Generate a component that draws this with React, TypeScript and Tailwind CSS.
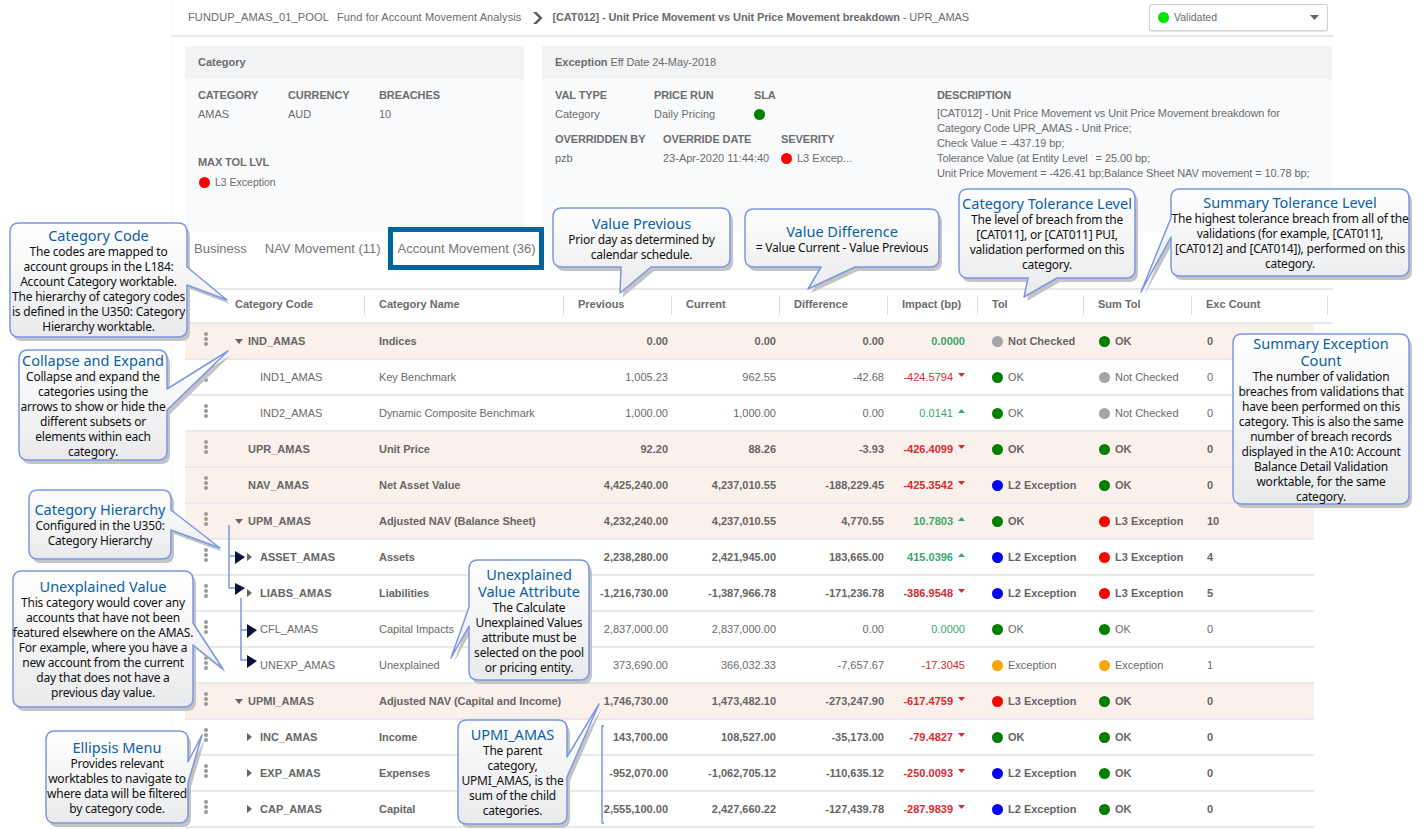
import React from 'react';

type Level = 'ok' | 'nc' | 'l2' | 'l3' | 'ex';
type Row = {
  code: string;
  name: string;
  prev: string;
  curr: string;
  diff: string;
  impact: string;
  dir?: 'up' | 'down';
  tol: Level;
  sum: Level;
  exc: string;
  pink?: boolean;
  bold?: boolean;
  child?: boolean;
  caret?: 'down' | 'right';
};

const LEVELS: Record<Level, { label: string; dot: string }> = {
  ok: { label: 'OK', dot: 'bg-[#008000]' },
  nc: { label: 'Not Checked', dot: 'bg-[#a5a5a5]' },
  l2: { label: 'L2 Exception', dot: 'bg-[#0000ff]' },
  l3: { label: 'L3 Exception', dot: 'bg-[#ff0000]' },
  ex: { label: 'Exception', dot: 'bg-[#ffa500]' },
};

const ROWS: Row[] = [
  { code: 'IND_AMAS', name: 'Indices', prev: '0.00', curr: '0.00', diff: '0.00', impact: '0.0000', tol: 'nc', sum: 'ok', exc: '0', pink: true, bold: true, caret: 'down' },
  { code: 'IND1_AMAS', name: 'Key Benchmark', prev: '1,005.23', curr: '962.55', diff: '-42.68', impact: '-424.5794', dir: 'down', tol: 'ok', sum: 'nc', exc: '0', child: true },
  { code: 'IND2_AMAS', name: 'Dynamic Composite Benchmark', prev: '1,000.00', curr: '1,000.00', diff: '0.00', impact: '0.0141', dir: 'up', tol: 'ok', sum: 'nc', exc: '0', child: true },
  { code: 'UPR_AMAS', name: 'Unit Price', prev: '92.20', curr: '88.26', diff: '-3.93', impact: '-426.4099', dir: 'down', tol: 'ok', sum: 'ok', exc: '0', pink: true, bold: true },
  { code: 'NAV_AMAS', name: 'Net Asset Value', prev: '4,425,240.00', curr: '4,237,010.55', diff: '-188,229.45', impact: '-425.3542', dir: 'down', tol: 'l2', sum: 'ok', exc: '0', pink: true, bold: true },
  { code: 'UPM_AMAS', name: 'Adjusted NAV (Balance Sheet)', prev: '4,232,240.00', curr: '4,237,010.55', diff: '4,770.55', impact: '10.7803', dir: 'up', tol: 'ok', sum: 'l3', exc: '10', pink: true, bold: true, caret: 'down' },
  { code: 'ASSET_AMAS', name: 'Assets', prev: '2,238,280.00', curr: '2,421,945.00', diff: '183,665.00', impact: '415.0396', dir: 'up', tol: 'l2', sum: 'l3', exc: '4', bold: true, child: true, caret: 'right' },
  { code: 'LIABS_AMAS', name: 'Liabilities', prev: '-1,216,730.00', curr: '-1,387,966.78', diff: '-171,236.78', impact: '-386.9548', dir: 'down', tol: 'l2', sum: 'l3', exc: '5', bold: true, child: true, caret: 'right' },
  { code: 'CFL_AMAS', name: 'Capital Impacts', prev: '2,837,000.00', curr: '2,837,000.00', diff: '0.00', impact: '0.0000', tol: 'ok', sum: 'ok', exc: '0', child: true },
  { code: 'UNEXP_AMAS', name: 'Unexplained', prev: '373,690.00', curr: '366,032.33', diff: '-7,657.67', impact: '-17.3045', tol: 'ex', sum: 'ex', exc: '1', child: true },
  { code: 'UPMI_AMAS', name: 'Adjusted NAV (Capital and Income)', prev: '1,746,730.00', curr: '1,473,482.10', diff: '-273,247.90', impact: '-617.4759', dir: 'down', tol: 'l3', sum: 'ok', exc: '0', pink: true, bold: true, caret: 'down' },
  { code: 'INC_AMAS', name: 'Income', prev: '143,700.00', curr: '108,527.00', diff: '-35,173.00', impact: '-79.4827', dir: 'down', tol: 'ok', sum: 'ok', exc: '0', bold: true, child: true, caret: 'right' },
  { code: 'EXP_AMAS', name: 'Expenses', prev: '-952,070.00', curr: '-1,062,705.12', diff: '-110,635.12', impact: '-250.0093', dir: 'down', tol: 'l2', sum: 'ok', exc: '0', bold: true, child: true, caret: 'right' },
  { code: 'CAP_AMAS', name: 'Capital', prev: '2,555,100.00', curr: '2,427,660.22', diff: '-127,439.78', impact: '-287.9839', dir: 'down', tol: 'l2', sum: 'ok', exc: '0', bold: true, child: true, caret: 'right' },
];

const HEADERS = ['Category Code', 'Category Name', 'Previous', 'Current', 'Difference', 'Impact (bp)', 'Tol', 'Sum Tol', 'Exc Count'];

const GRID = 'grid grid-cols-[180px_199px_108px_108px_108px_90px_106px_108px_122px]';
const HEAD_GRID = 'grid grid-cols-[180px_199px_108px_108px_108px_90px_106px_108px_136px]';

// x, y, w, h of the box, then the tail as three points (start, tip, end)
type Tail = number[];
const SHAPES: { x: number; y: number; w: number; h: number; side: 'l' | 'r' | 'b'; tail: Tail }[] = [
  { x: 10, y: 223, w: 177, h: 114, side: 'r', tail: [187, 267, 227, 300, 187, 285] },
  { x: 19, y: 350, w: 148, h: 110, side: 'r', tail: [167, 389, 228, 351, 167, 410] },
  { x: 29, y: 490, w: 142, h: 69, side: 'r', tail: [171, 510, 220, 548, 171, 530] },
  { x: 13, y: 571, w: 180, h: 136, side: 'r', tail: [193, 623, 223, 669, 193, 645] },
  { x: 46, y: 731, w: 142, h: 92, side: 'r', tail: [188, 762, 202, 735, 188, 783] },
  { x: 469, y: 560, w: 120, h: 120, side: 'l', tail: [469, 626, 451, 658, 469, 607] },
  { x: 458, y: 720, w: 109, h: 104, side: 'r', tail: [567, 757, 599, 704, 567, 777] },
  { x: 553, y: 208, w: 177, h: 59, side: 'b', tail: [651, 267, 620, 293, 621, 267] },
  { x: 745, y: 209, w: 194, h: 58, side: 'b', tail: [855, 267, 808, 289, 821, 267] },
  { x: 959, y: 189, w: 176, h: 89, side: 'b', tail: [1057, 278, 1024, 297, 1028, 278] },
  { x: 1171, y: 189, w: 238, h: 87, side: 'l', tail: [1171, 237, 1141, 292, 1171, 218] },
  { x: 1233, y: 334, w: 176, h: 170, side: 'r', tail: [] },
];

const shapePath = (s: (typeof SHAPES)[number], dx = 0, dy = 0) => {
  const r = 9;
  const x = s.x + dx;
  const y = s.y + dy;
  const x2 = x + s.w;
  const y2 = y + s.h;
  const t = s.tail.map((v, i) => v + (i % 2 === 0 ? dx : dy));
  const pts = (side: string) =>
    s.side === side && t.length ? `L${t[0]} ${t[1]} L${t[2]} ${t[3]} L${t[4]} ${t[5]} ` : '';
  // the tail points are given in the order the outline runs past them (clockwise)
  return (
    `M${x + r} ${y} L${x2 - r} ${y} Q${x2} ${y} ${x2} ${y + r} ` +
    pts('r') +
    `L${x2} ${y2 - r} Q${x2} ${y2} ${x2 - r} ${y2} ` +
    pts('b') +
    `L${x + r} ${y2} Q${x} ${y2} ${x} ${y2 - r} ` +
    pts('l') +
    `L${x} ${y + r} Q${x} ${y} ${x + r} ${y} Z`
  );
};

const CALLOUTS: { pos: string; title: string[]; lines: string[] }[] = [
  { pos: 'left-[10px] top-[223px] w-[177px] h-[114px]', title: ['Category Code'], lines: ['The codes are mapped to', 'account groups in the L184:', 'Account Category worktable.', 'The hierarchy of category codes', 'is defined in the U350: Category', 'Hierarchy worktable.'] },
  { pos: 'left-[19px] top-[350px] w-[148px] h-[110px]', title: ['Collapse and Expand'], lines: ['Collapse and expand the', 'categories using the', 'arrows to show or hide the', 'different subsets or', 'elements within each', 'category.'] },
  { pos: 'left-[29px] top-[490px] w-[142px] h-[69px]', title: ['Category Hierarchy'], lines: ['Configured in the U350:', 'Category Hierarchy'] },
  { pos: 'left-[13px] top-[571px] w-[180px] h-[136px]', title: ['Unexplained Value'], lines: ['This category would cover any', 'accounts that have not been', 'featured elsewhere on the AMAS.', 'For example, where you have a', 'new account from the current', 'day that does not have a', 'previous day value.'] },
  { pos: 'left-[46px] top-[731px] w-[142px] h-[92px]', title: ['Ellipsis Menu'], lines: ['Provides relevant', 'worktables to navigate to', 'where data will be filtered', 'by category code.'] },
  { pos: 'left-[469px] top-[560px] w-[120px] h-[120px]', title: ['Unexplained', 'Value Attribute'], lines: ['The Calculate', 'Unexplained Values', 'attribute must be', 'selected on the pool', 'or pricing entity.'] },
  { pos: 'left-[458px] top-[720px] w-[109px] h-[104px]', title: ['UPMI_AMAS'], lines: ['The parent', 'category,', 'UPMI_AMAS, is the', 'sum of the child', 'categories.'] },
  { pos: 'left-[553px] top-[209px] w-[177px] h-[59px]', title: ['Value Previous'], lines: ['Prior day as determined by', 'calendar schedule.'] },
  { pos: 'left-[745px] top-[210px] w-[194px] h-[58px]', title: ['Value Difference'], lines: ['= Value Current - Value Previous'] },
  { pos: 'left-[959px] top-[189px] w-[176px] h-[89px]', title: ['Category Tolerance Level'], lines: ['The level of breach from the', '[CAT011], or [CAT011] PUI,', 'validation performed on this', 'category.'] },
  { pos: 'left-[1171px] top-[189px] w-[238px] h-[87px]', title: ['Summary Tolerance Level'], lines: ['The highest tolerance breach from all of the', 'validations (for example, [CAT011],', '[CAT012] and [CAT014]), performed on this', 'category.'] },
  { pos: 'left-[1233px] top-[334px] w-[176px] h-[170px]', title: ['Summary Exception', 'Count'], lines: ['The number of validation', 'breaches from validations that', 'have been performed on this', 'category. This is also the same', 'number of breach records', 'displayed in the A10: Account', 'Balance Detail Validation', 'worktable, for the same', 'category.'] },
];

const Dot: React.FC<{ cls: string; size?: string }> = ({ cls, size = 'w-[11px] h-[11px]' }) => (
  <span className={`inline-block rounded-full shrink-0 ${size} ${cls}`} />
);

const Status: React.FC<{ level: Level }> = ({ level }) => (
  <div className="flex items-center gap-[5px]">
    <Dot cls={LEVELS[level].dot} />
    <span>{LEVELS[level].label}</span>
  </div>
);

const Label: React.FC<{ children: React.ReactNode }> = ({ children }) => (
  <div className="font-bold text-[#6e6e6e] tracking-[-0.1px]">{children}</div>
);

const TableRow: React.FC<{ row: Row }> = ({ row }) => (
  <div
    className={`${GRID} w-[1129px] h-[36px] items-center border-b-2 border-[#e9e9e9] ${row.pink ? 'bg-[#fbf1ec]' : 'bg-white'} ${row.bold ? 'font-bold text-[#666666]' : 'text-[#6c6c6c]'}`}
  >
    <div className={`relative flex items-center ${row.child ? 'pl-[62px]' : 'pl-[50px]'}`}>
      <span className="absolute left-[19px] top-[-1px] flex flex-col gap-[1px]">
        <span className="w-[4px] h-[4px] rounded-full bg-[#9a9a9a]" />
        <span className="w-[4px] h-[4px] rounded-full bg-[#9a9a9a]" />
        <span className="w-[4px] h-[4px] rounded-full bg-[#9a9a9a]" />
      </span>
      <span className="w-[13px] flex items-center">
        {row.caret === 'down' && (
          <svg width="8" height="5" viewBox="0 0 8 5">
            <path d="M0 0H8L4 5Z" fill="#666" />
          </svg>
        )}
        {row.caret === 'right' && (
          <svg width="5" height="8" viewBox="0 0 5 8">
            <path d="M0 0V8L5 4Z" fill="#666" />
          </svg>
        )}
      </span>
      <span>{row.code}</span>
    </div>
    <div className="ml-[14px] justify-self-start whitespace-nowrap tracking-[-0.05px]">{row.name}</div>
    <div className="text-right pr-[4px]">{row.prev}</div>
    <div className="text-right pr-[4px]">{row.curr}</div>
    <div className="text-right pr-[4px]">{row.diff}</div>
    <div className="flex items-center justify-end pr-[13px]">
      <span className={row.impact.startsWith('-') ? 'text-[#d92a2f]' : 'text-[#3aa76d]'}>{row.impact}</span>
      {row.dir === 'up' && (
        <svg className="ml-[5px] mb-[5px]" width="7" height="4" viewBox="0 0 7 4">
          <path d="M0 4H7L3.5 0Z" fill="#3aa76d" />
        </svg>
      )}
      {row.dir === 'down' && (
        <svg className="ml-[5px] mb-[5px]" width="7" height="4" viewBox="0 0 7 4">
          <path d="M0 0H7L3.5 4Z" fill="#d92a2f" />
        </svg>
      )}
    </div>
    <div className="pl-[14px] whitespace-nowrap">
      <Status level={row.tol} />
    </div>
    <div className="pl-[15px] whitespace-nowrap">
      <Status level={row.sum} />
    </div>
    <div className="ml-[15px] justify-self-start">{row.exc}</div>
  </div>
);

const App: React.FC = () => {
  return (
    <div className="relative w-[1424px] h-[829px] overflow-hidden bg-white text-[11px] text-[#6c6c6c] font-['Liberation_Sans',Arial,sans-serif]">
      <div className="ml-[171px] w-[1162px] h-[829px] border-l border-[#f6f6f6]">
        {/* breadcrumb */}
        <div className="flex items-center h-[37px] border-b-2 border-[#e8e8e8] pl-[16px] pr-[4px]">
          <span className="tracking-[0.15px]">FUNDUP_AMAS_01_POOL</span>
          <span className="ml-[8px] tracking-[0.1px]">Fund for Account Movement Analysis</span>
          <svg className="ml-[11px]" width="11" height="14" viewBox="0 0 11 14">
            <path d="M1 1L7 7L1 13H4.5L10.5 7L4.5 1Z" fill="#5c5c5c" />
          </svg>
          <span className="ml-[9px] font-bold tracking-[-0.11px]">[CAT012] - Unit Price Movement vs Unit Price Movement breakdown</span>
          <span className="ml-[3px] tracking-[-0.1px]">- UPR_AMAS</span>
          <div className="ml-auto flex items-center w-[179px] h-[27px] border border-[#cfcfcf] rounded-[3px] pl-[8px] pr-[8px] gap-[5px] bg-white shadow-[0_1px_1px_#e5e5e5]">
            <Dot cls="bg-[#00e600]" />
            <span className="text-[10.5px]">Validated</span>
            <svg className="ml-auto" width="9" height="5" viewBox="0 0 9 5">
              <path d="M0 0H9L4.5 5Z" fill="#666" />
            </svg>
          </div>
          <div className="w-[1px]" />
        </div>

        {/* summary panels */}
        <div className="flex gap-[18px] pl-[13px] pt-[9px]">
          <div className="w-[339px] h-[186px] bg-[#f9fafc]">
            <div className="h-[33px] flex items-center pl-[13px] bg-[#f2f3f5] font-bold">Category</div>
            <div className="pl-[13px] pt-[10px]">
              <div className="grid grid-cols-[90px_91px_90px] gap-y-[6px] leading-[13px]">
                <Label>CATEGORY</Label>
                <Label>CURRENCY</Label>
                <Label>BREACHES</Label>
                <div>AMAS</div>
                <div>AUD</div>
                <div>10</div>
              </div>
              <div className="mt-[35px] leading-[13px]">
                <Label>MAX TOL LVL</Label>
                <div className="mt-[7px] ml-[1px] flex items-center gap-[5px] text-[10.5px]">
                  <Dot cls="bg-[#ff0000]" />
                  <span>L3 Exception</span>
                </div>
              </div>
            </div>
          </div>
          <div className="w-[790px] h-[186px] bg-[#f9fafc]">
            <div className="h-[33px] flex items-center pl-[13px] bg-[#f2f3f5]">
              <span className="font-bold">Exception</span>
              <span className="ml-[3px] tracking-[-0.1px]">Eff Date 24-May-2018</span>
            </div>
            <div className="flex pl-[13px] pt-[10px]">
              <div className="w-[382px]">
                <div className="grid grid-cols-[99px_100px_100px] gap-y-[6px] leading-[13px]">
                  <Label>VAL TYPE</Label>
                  <Label>PRICE RUN</Label>
                  <Label>SLA</Label>
                  <div>Category</div>
                  <div>Daily Pricing</div>
                  <div className="flex items-center">
                    <Dot cls="bg-[#008000]" />
                  </div>
                </div>
                <div className="grid grid-cols-[108px_118px_100px] gap-y-[6px] mt-[12px] leading-[13px] whitespace-nowrap">
                  <Label>OVERRIDDEN BY</Label>
                  <Label>OVERRIDE DATE</Label>
                  <Label>SEVERITY</Label>
                  <div>pzb</div>
                  <div>23-Apr-2020 11:44:40</div>
                  <div className="flex items-center gap-[5px]">
                    <Dot cls="bg-[#ff0000]" />
                    <span>L3 Excep...</span>
                  </div>
                </div>
              </div>
              <div className="whitespace-nowrap">
                <div className="leading-[13px]">
                  <Label>DESCRIPTION</Label>
                </div>
                <div className="mt-[4px] leading-[15px] tracking-[-0.1px]">
                  <div>[CAT012] - Unit Price Movement vs Unit Price Movement breakdown for</div>
                  <div>Category Code UPR_AMAS - Unit Price;</div>
                  <div>Check Value = -437.19 bp;</div>
                  <div>
                    Tolerance Value (at Entity Level <span className="text-[#d5d5d5]">'</span> = 25.00 bp;
                  </div>
                  <div>Unit Price Movement = -426.41 bp;Balance Sheet NAV movement = 10.78 bp;</div>
                </div>
              </div>
            </div>
          </div>
        </div>

        {/* tabs */}
        <div className="flex items-center h-[43px] mt-[-5px] pl-[22px] text-[13px] text-[#777777]">
          <span className="mr-[18px] mt-[1px]">Business</span>
          <span className="mr-[7px] mt-[1px]">NAV Movement (11)</span>
          <span className="flex items-center h-[43px] border-[5px] border-[#00659c] pl-[5px] pr-[3px] pt-[1px] bg-white whitespace-nowrap">
            Account Movement (36)
          </span>
        </div>

        {/* table */}
        <div className="pl-[13px] mt-[18px]">
          <div className="w-[1148px] h-[36px] border-t-2 border-b-2 border-[#e8e8e8] flex items-center font-bold">
            <div className={`${HEAD_GRID} mb-[2px]`}>
              {HEADERS.map((h, i) => (
                <div
                  key={h}
                  className={`h-[19px] flex items-center whitespace-nowrap border-r border-[#dedede] ${i === 0 ? 'pl-[50px]' : 'pl-[14px]'}`}
                >
                  <span className="mb-[2px]">{h}</span>
                </div>
              ))}
            </div>
          </div>
          {ROWS.map((r) => (
            <TableRow key={r.code} row={r} />
          ))}
        </div>
      </div>

      {/* annotation layer */}
      <svg className="absolute left-0 top-0 pointer-events-none" width="1424" height="829" viewBox="0 0 1424 829">
        <defs>
          <linearGradient id="calloutFill" x1="0" y1="0" x2="0" y2="1">
            <stop offset="0" stopColor="#ffffff" />
            <stop offset="1" stopColor="#e9eaec" />
          </linearGradient>
        </defs>
        <g fill="none" stroke="#7c97e6" strokeWidth="1.5">
          <path d="M229 525V588H236" />
          <path d="M229 556H236" />
          <path d="M241 598V660H248" />
          <path d="M241 630H248" />
          <path d="M604 726H602V823H604" />
        </g>
        <g fill="#0b1238">
          <path d="M235 551L245 557L235 564Z" />
          <path d="M235 583L245 588L235 595Z" />
          <path d="M247 624L257 630L247 638Z" />
          <path d="M247 655L257 661L247 668Z" />
        </g>
        {SHAPES.map((s, i) => (
          <g key={i}>
            <path d={shapePath(s, 3, 4)} fill="#c4c4c4" />
            <path d={shapePath(s)} fill="url(#calloutFill)" stroke="#7c97e6" strokeWidth="1.5" strokeLinejoin="round" />
          </g>
        ))}
      </svg>
      {CALLOUTS.map((c) => (
        <div
          key={c.title[0]}
          className={`absolute ${c.pos} flex flex-col items-center justify-center text-center whitespace-nowrap font-['Noto_Sans',sans-serif] text-[12px] tracking-[-0.22px] leading-[15px] text-[#111111]`}
        >
          {c.title.map((t) => (
            <div key={t} className="text-[14.5px] tracking-normal leading-[17px] text-[#0a62a8]">
              {t}
            </div>
          ))}
          {c.lines.map((l) => (
            <div key={l}>{l}</div>
          ))}
        </div>
      ))}
    </div>
  );
};

export default App;
